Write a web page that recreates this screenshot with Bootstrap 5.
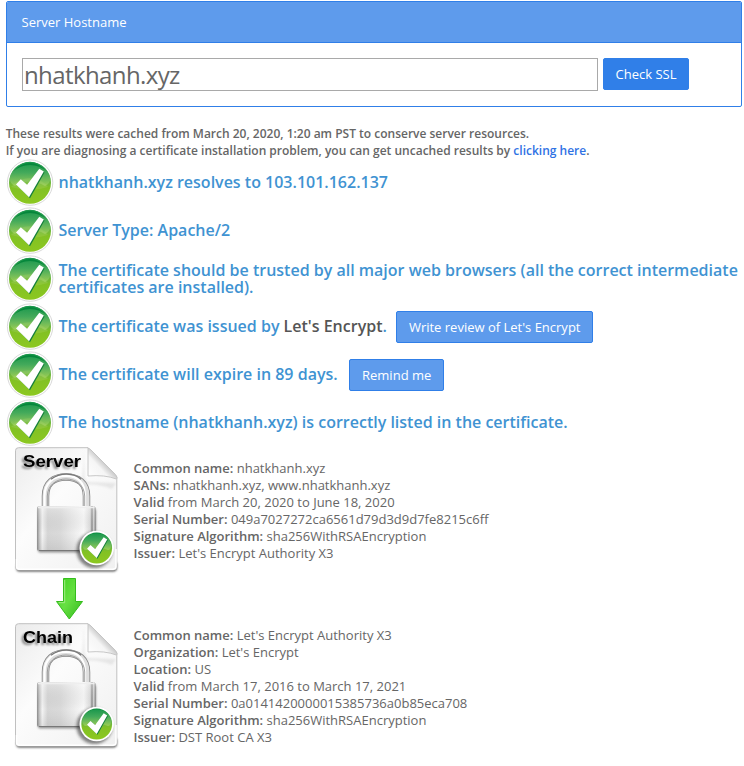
<!DOCTYPE html>
<html lang="en">
<head>
<meta charset="utf-8">
<meta name="viewport" content="width=device-width, initial-scale=1">
<title>SSL Checker</title>
<link href="https://cdn.jsdelivr.net/npm/bootstrap@5.3.0/dist/css/bootstrap.min.css" rel="stylesheet">
<style>
body{font:13px/17px "Open Sans",sans-serif;color:#666;background:#fff;overflow:hidden}
.checker{width:744px;padding:1px 2px 0 6px}
.host-card{--bs-card-border-color:#307fe8;--bs-card-border-radius:2px;--bs-card-inner-border-radius:1px;height:106px}
.host-card .card-header{background:#5e9bec;height:41px;padding:12px 14.5px;color:#fff;border-color:#307fe8}
.host-card .card-body{padding:15px;gap:5px}
.host-input{width:576px;height:33px;padding:0 1px;border:1px solid #a9a9a9;border-radius:0;color:#666;font-size:24px;line-height:31px;letter-spacing:-.6px}
.btn-ssl{--bs-btn-font-size:13px;--bs-btn-line-height:17px;--bs-btn-padding-x:11.5px;--bs-btn-padding-y:6.5px;--bs-btn-border-radius:2px;--bs-btn-color:#fff;--bs-btn-bg:#5e9bec;--bs-btn-border-color:#307fe8;--bs-btn-hover-color:#fff;--bs-btn-hover-bg:#307fe8;height:32px;white-space:nowrap}
.btn-main{--bs-btn-bg:#307fe8}
.btn-review{margin-left:5px}
.btn-remind{margin-left:7px;width:95px}
.cache-note{margin:18px 0 0 -.3px;font-size:12px;font-weight:600}
.cache-note a{color:#2f72e4}
.check-row{height:48px;gap:4.5px;color:#3f93d2;font-size:16px;font-weight:600}
.check-row .issuer{color:#555}
.check-text{padding-bottom:2px}
.check-wrap{padding-bottom:0}
.cert-row{height:128px;gap:3.5px}
.cert-row b{font-weight:600}
.cert-row svg,.arrow-row svg{margin-left:-6px}
.chain-details{margin-top:-2px}
.arrow-row{height:48px}
.doc-name{font:bold 17px "Liberation Sans",Arial,sans-serif;filter:drop-shadow(-2px 2px 1px rgba(0,0,0,.45))}
</style>
</head>
<body>
<svg width="0" height="0" class="position-absolute" aria-hidden="true">
<defs>
<linearGradient id="top" x1="0" y1="0" x2="0" y2="1"><stop offset="0" stop-color="#1e9a50"/><stop offset=".45" stop-color="#45ab5e"/><stop offset="1" stop-color="#a0d058"/></linearGradient>
<linearGradient id="ball" x1="0" y1="0" x2="0" y2="1"><stop offset="0" stop-color="#008838"/><stop offset=".4" stop-color="#5fb050"/><stop offset=".62" stop-color="#82c124"/><stop offset="1" stop-color="#8cc820"/></linearGradient>
<linearGradient id="paper" x1="0" y1="0" x2="1" y2="1"><stop offset="0" stop-color="#ebebeb"/><stop offset=".4" stop-color="#fcfcfc"/><stop offset="1" stop-color="#f0f0f0"/></linearGradient>
<linearGradient id="fold" x1="0" y1="1" x2=".55" y2=".45"><stop offset="0" stop-color="#fff"/><stop offset=".7" stop-color="#f5f5f5"/><stop offset="1" stop-color="#c8c8c8"/></linearGradient>
<linearGradient id="steel" x1="0" y1="0" x2="1" y2="0"><stop offset="0" stop-color="#8a8a8a"/><stop offset=".04" stop-color="#c4c4c4"/><stop offset=".09" stop-color="#f4f4f4"/><stop offset=".18" stop-color="#d6d6d6"/><stop offset=".4" stop-color="#dadada"/><stop offset=".8" stop-color="#fafafa"/><stop offset=".91" stop-color="#ddd"/><stop offset=".94" stop-color="#888"/><stop offset=".97" stop-color="#ddd"/><stop offset="1" stop-color="#777"/></linearGradient>
<linearGradient id="shade" x1="0" y1="0" x2="0" y2="1"><stop offset="0" stop-color="#fff" stop-opacity=".3"/><stop offset=".6" stop-color="#888" stop-opacity="0"/><stop offset="1" stop-color="#555" stop-opacity=".12"/></linearGradient>
<linearGradient id="arrow" x1="0" y1="0" x2="1" y2="1"><stop offset="0" stop-color="#3fcf20"/><stop offset=".5" stop-color="#66e042"/><stop offset="1" stop-color="#32b81c"/></linearGradient>
<filter id="blur1" x="-20%" y="-40%" width="140%" height="200%"><feGaussianBlur stdDeviation="1"/></filter>
<filter id="blur2" x="-30%" y="-60%" width="160%" height="240%"><feGaussianBlur stdDeviation="1.8"/></filter>
<symbol id="check" viewBox="0 0 48 48">
<circle cx="24.1" cy="23.6" r="22.7" fill="#fff" stroke="#d5d5d5" stroke-width=".9"/>
<circle cx="24" cy="23.8" r="21" fill="url(#ball)"/>
<path d="M3.800 19.500A20.600 20.600 0 0 1 44.200 19.500Q44 25 39 27Q24 18 9 27Q4 25 3.800 19.500Z" fill="url(#top)" opacity=".85"/>
<path d="M5 28Q15 17 29 20Q38 22 42 28Q24 34 5 28Z" fill="#b5d96e" opacity=".25"/>
<path d="M7.500 12.500A20.300 20.300 0 0 1 40.500 12.500Q34 6 24 6T7.500 12.500Z" fill="#008438" opacity=".85"/>
<path d="M11 26.300L15.500 21.200L22 27L34.200 11L38.600 13.400L24 39.200Z" fill="#16803b"/>
<path d="M10 25.400L14.800 20.200L21.100 25.800L33.300 9.800L37.800 12.600L23 38.200Z" fill="#fff"/>
</symbol>
<symbol id="doc" viewBox="0 0 130 128">
<path d="M16.500 118V122Q16.500 124.500 19.500 124.500H113Q117 124.500 117 120.500V116Z" fill="#555" filter="url(#blur1)"/>
<path d="M18.500 .7H88L116.800 30V119.500Q116.800 123 113.500 123H18.500Q15.500 123 15.500 120V3.700Q15.500 .7 18.500 .7Z" fill="url(#paper)" stroke="#c0c0c0" stroke-width="1"/>
<path d="M16.500 112V119.500Q16.500 122.200 19.500 122.200H112.500Q116 122.200 116 119.500V102" fill="none" stroke="#fff" stroke-width="1.500"/>
<path d="M84 2L84.500 29Q85 34 88 35L116 36L112 42Q98 36 82 38Z" fill="#999" opacity=".18" filter="url(#blur1)"/>
<path d="M88 1Q90 2 91 3L115.500 27.500Q118 31 116.300 32Q105 27.500 88 29Z" fill="url(#fold)" stroke="#c2c2c2" stroke-width=".9"/>
<path d="M45.500 61V49C45.500 36 54 30 66 30S86.500 36 86.500 49V61" fill="none" stroke="#858585" stroke-width="7.500"/>
<path d="M45.500 61V49C45.500 36 54 30 66 30S86.500 36 86.500 49V61" fill="none" stroke="#dedede" stroke-width="5.900"/>
<path d="M44.500 61V49C44.800 35.500 53.500 29 66 29S84.800 35.500 85 49V61" fill="none" stroke="#fff" stroke-width="2.200"/>
<path d="M47.300 61V49C47.800 38 56 32 66 32S84.300 38 84.700 49V61" fill="none" stroke="#8c8c8c" stroke-width=".8"/>
<path d="M51 32.300Q58 27 67 27.200T81 32.300" fill="none" stroke="#777" stroke-width="1.300"/>
<rect x="38" y="62" width="58" height="43.500" rx="2" fill="#333" opacity=".5" filter="url(#blur1)"/>
<rect x="37" y="59" width="58.500" height="45" rx="2.500" fill="url(#steel)"/>
<rect x="37" y="59" width="58.500" height="45" rx="2.500" fill="url(#shade)"/>
<path d="M38 60.500H94.500" stroke="#eee" stroke-width="1.500"/>
<path d="M39 103.500H94" stroke="#777" stroke-width="1.200"/>
<circle cx="94.500" cy="103" r="18" fill="#222" opacity=".55" filter="url(#blur2)"/>
<circle cx="96.700" cy="101" r="17.200" fill="#fff"/>
<circle cx="96.700" cy="101" r="15.400" fill="url(#ball)"/>
<path d="M82.200 98A14.800 14.800 0 0 1 111.200 98Q111 103 108 103Q97 98 86 103Q83 103 82.200 98Z" fill="url(#top)" opacity=".85"/>
<path d="M88 102.500L91.500 98.700L96 102.700L104.500 91L108 93L97.500 111.700Z" fill="#16803b"/>
<path d="M87 101.800L90.500 98L95.200 101.900L103.700 90.300L107.200 92.500L96.700 111Z" fill="#fff"/>
</symbol>
</defs>
</svg>

<main class="checker">
<section class="card host-card">
<div class="card-header">Server Hostname</div>
<div class="card-body d-flex align-items-start">
<input class="host-input" type="text" value="nhatkhanh.xyz" aria-label="Server Hostname">
<button class="btn btn-ssl btn-main" type="button">Check SSL</button>
</div>
</section>

<div class="cache-note">These results were cached from March 20, 2020, 1:20 am PST to conserve server resources.<br>If you are diagnosing a certificate installation problem, you can get uncached results by <a class="text-decoration-none" href="#">clicking here</a>.</div>

<section>
<div class="check-row d-flex align-items-center"><svg class="flex-shrink-0" width="48" height="48"><use href="#check"/></svg><div class="check-text">nhatkhanh.xyz resolves to 103.101.162.137</div></div>
<div class="check-row d-flex align-items-center"><svg class="flex-shrink-0" width="48" height="48"><use href="#check"/></svg><div class="check-text">Server Type: Apache/2</div></div>
<div class="check-row d-flex align-items-center"><svg class="flex-shrink-0" width="48" height="48"><use href="#check"/></svg><div class="check-text check-wrap">The certificate should be trusted by all major web browsers (all the correct intermediate certificates are installed).</div></div>
<div class="check-row d-flex align-items-center"><svg class="flex-shrink-0" width="48" height="48"><use href="#check"/></svg><div class="check-text">The certificate was issued by <span class="issuer">Let's Encrypt</span>.</div><button class="btn btn-ssl btn-review" type="button">Write review of Let's Encrypt</button></div>
<div class="check-row d-flex align-items-center"><svg class="flex-shrink-0" width="48" height="48"><use href="#check"/></svg><div class="check-text">The certificate will expire in 89 days.</div><button class="btn btn-ssl btn-remind" type="button">Remind me</button></div>
<div class="check-row d-flex align-items-center"><svg class="flex-shrink-0" width="48" height="48"><use href="#check"/></svg><div class="check-text">The hostname (nhatkhanh.xyz) is correctly listed in the certificate.</div></div>
</section>

<section>
<div class="cert-row d-flex align-items-center">
<svg class="flex-shrink-0" width="130" height="128"><use href="#doc"/><text class="doc-name" x="23" y="20" textLength="58" lengthAdjust="spacingAndGlyphs">Server</text></svg>
<div><b>Common name:</b> nhatkhanh.xyz<br><b>SANs:</b> nhatkhanh.xyz, www.nhatkhanh.xyz<br><b>Valid</b> from March 20, 2020 to June 18, 2020<br><b>Serial Number:</b> 049a7027272ca6561d79d3d9d7fe8215c6ff<br><b>Signature Algorithm:</b> sha256WithRSAEncryption<br><b>Issuer:</b> Let's Encrypt Authority X3</div>
</div>
<div class="arrow-row"><svg class="d-block" width="130" height="48"><path d="M63.500 3.500H75.500V26.500H82.500L69.300 44L56.500 26.500H63.500Z" fill="url(#arrow)" stroke="#35bd1d"/><path d="M64.700 5V27.700H58.700" fill="none" stroke="#a2ee86"/></svg></div>
<div class="cert-row d-flex align-items-center">
<svg class="flex-shrink-0" width="130" height="128"><use href="#doc"/><text class="doc-name" x="23" y="20" textLength="50" lengthAdjust="spacingAndGlyphs">Chain</text></svg>
<div class="chain-details"><b>Common name:</b> Let's Encrypt Authority X3<br><b>Organization:</b> Let's Encrypt<br><b>Location:</b> US<br><b>Valid</b> from March 17, 2016 to March 17, 2021<br><b>Serial Number:</b> 0a0141420000015385736a0b85eca708<br><b>Signature Algorithm:</b> sha256WithRSAEncryption<br><b>Issuer:</b> DST Root CA X3</div>
</div>
</section>
</main>
<script src="https://cdn.jsdelivr.net/npm/bootstrap@5.3.0/dist/js/bootstrap.bundle.min.js"></script>
</body>
</html>
